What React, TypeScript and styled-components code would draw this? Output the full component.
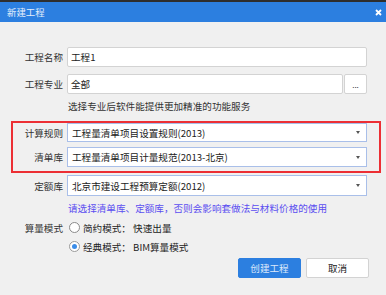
import styled, { createGlobalStyle } from "styled-components";

const GlobalStyle = createGlobalStyle`
  html, body {
    margin: 0;
    padding: 0;
    background: #f0f0f0;
  }
  body {
    font-family: "Noto Sans CJK SC", "Noto Sans", sans-serif;
    font-size: 9.6px;
    color: #333;
  }
`;

const Window = styled.div`
  width: 386px;
  height: 295px;
  background: #f0f0f0;
  display: flex;
  flex-direction: column;
  overflow: hidden;
`;

const TitleBar = styled.div`
  height: 20px;
  border-top: 2px solid #2e2e2e;
  background: #2c7fe0;
  display: flex;
  align-items: center;
  justify-content: space-between;
  padding: 0 4px 0 7px;
  color: #e4eefb;
  font-size: 9.4px;
  line-height: 20px;
`;

const Close = styled.svg`
  width: 7px;
  height: 7px;
`;

const Body = styled.div`
  display: flex;
  flex-direction: column;
  padding: 23px 5px 0 11px;
`;

const Group = styled.div<{ $highlight?: boolean; $space?: number }>`
  display: flex;
  flex-direction: column;
  border: 2px solid ${(p) => (p.$highlight ? "#ec2f34" : "transparent")};
  padding-bottom: ${(p) => (p.$highlight ? "4px" : "0")};
  margin-bottom: ${(p) => p.$space ?? 0}px;
`;

const Row = styled.div<{ $gap?: number }>`
  display: flex;
  align-items: center;
  margin-top: ${(p) => p.$gap ?? 0}px;
`;

const Label = styled.div`
  width: 50px;
  flex: none;
  text-align: right;
  line-height: 14px;
  color: #333;
  margin-right: 4px;
`;

const Field = styled.div`
  width: 300px;
  display: flex;
  gap: 1px;
`;

const Input = styled.div`
  flex: 1;
  height: 20px;
  box-sizing: border-box;
  background: #fff;
  border: 1px solid #d3d3d3;
  border-radius: 2px;
  padding-left: 3px;
  line-height: 18px;
  color: #222;
`;

const MoreButton = styled.div`
  width: 23px;
  height: 20px;
  box-sizing: border-box;
  background: #fff;
  border: 1px solid #d3d3d3;
  border-radius: 2px;
  text-align: center;
  line-height: 20px;
  font-size: 8px;
  color: #333;
`;

const Select = styled.div<{ $h?: number }>`
  flex: 1;
  height: ${(p) => p.$h ?? 20}px;
  box-sizing: border-box;
  background: #fff;
  border: 1px solid #a9bfe9;
  display: flex;
  align-items: center;
  justify-content: space-between;
  padding: 0 6px 0 4px;
  color: #222;
`;

const Caret = styled.span`
  width: 0;
  height: 0;
  border-left: 2.5px solid transparent;
  border-right: 2.5px solid transparent;
  border-top: 3px solid #555;
`;

const Hint = styled.div<{ $color?: string }>`
  margin: 6px 0 0 55px;
  line-height: 12px;
  color: ${(p) => p.$color ?? "#333"};
`;

const RadioRow = styled.div`
  display: flex;
  align-items: center;
  height: 19px;
`;

const Radio = styled.span<{ $checked?: boolean }>`
  width: 11px;
  height: 11px;
  box-sizing: border-box;
  border-radius: 50%;
  border: 1px solid ${(p) => (p.$checked ? "#9a9a9a" : "#8a8a8a")};
  background: #fff;
  display: flex;
  align-items: center;
  justify-content: center;
  margin: 0 3px 0 2px;
  &::after {
    content: "";
    width: 5px;
    height: 5px;
    border-radius: 50%;
    background: ${(p) => (p.$checked ? "#3a8ce8" : "transparent")};
  }
`;

const RadioText = styled.span`
  color: #222;
  line-height: 14px;
`;

const Actions = styled.div`
  display: flex;
  justify-content: flex-end;
  gap: 5px;
  width: 356px;
  margin-top: 2px;
`;

const Button = styled.div<{ $primary?: boolean }>`
  width: 63px;
  height: 20px;
  box-sizing: border-box;
  border-radius: 2px;
  text-align: center;
  line-height: 18px;
  background: ${(p) => (p.$primary ? "#2c7fe0" : "#fff")};
  border: 1px solid ${(p) => (p.$primary ? "#2c7fe0" : "#d3d3d3")};
  color: ${(p) => (p.$primary ? "#dce9fb" : "#222")};
`;

function App() {
  return (
    <Window>
      <GlobalStyle />
      <TitleBar>
        <span>新建工程</span>
        <Close viewBox="0 0 7 7">
          <path d="M1 1 L6 6 M6 1 L1 6" stroke="#fff" strokeWidth="1.8" />
        </Close>
      </TitleBar>
      <Body>
        <Group $space={7}>
          <Row>
            <Label>工程名称</Label>
            <Field>
              <Input>工程1</Input>
            </Field>
          </Row>
          <Row $gap={7}>
            <Label>工程专业</Label>
            <Field>
              <Input>全部</Input>
              <MoreButton>...</MoreButton>
            </Field>
          </Row>
          <Hint>选择专业后软件能提供更加精准的功能服务</Hint>
        </Group>
        <Group $highlight>
          <Row>
            <Label>计算规则</Label>
            <Field>
              <Select $h={19}>
                工程量清单项目设置规则(2013)
                <Caret />
              </Select>
            </Field>
          </Row>
          <Row $gap={5}>
            <Label>清单库</Label>
            <Field>
              <Select>
                工程量清单项目计量规范(2013-北京)
                <Caret />
              </Select>
            </Field>
          </Row>
        </Group>
        <Group>
          <Row>
            <Label>定额库</Label>
            <Field>
              <Select $h={21}>
                北京市建设工程预算定额(2012)
                <Caret />
              </Select>
            </Field>
          </Row>
          <Hint $color="#5b4ef0">
            请选择清单库、定额库，否则会影响套做法与材料价格的使用
          </Hint>
          <Row $gap={4}>
            <Label>算量模式</Label>
            <RadioRow>
              <Radio />
              <RadioText>简约模式： 快速出量</RadioText>
            </RadioRow>
          </Row>
          <Row>
            <Label />
            <RadioRow>
              <Radio $checked />
              <RadioText>经典模式： BIM算量模式</RadioText>
            </RadioRow>
          </Row>
          <Actions>
            <Button $primary>创建工程</Button>
            <Button>取消</Button>
          </Actions>
        </Group>
      </Body>
    </Window>
  );
}

export default App;
